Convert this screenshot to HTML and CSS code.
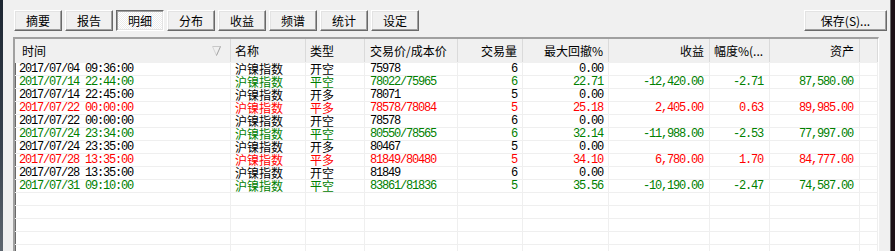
FILE: index.html
```html
<!DOCTYPE html>
<html lang="zh-CN">
<head>
<meta charset="utf-8">
<title>明细</title>
<link rel="stylesheet" href="styles.css">
</head>
<body>
<div class="app">
  <div class="edge-left"></div>
  <div class="main">
    <div class="toolbar">
      <div class="tabs">
        <button class="btn">摘要</button>
        <button class="btn">报告</button>
        <button class="btn active">明细</button>
        <button class="btn">分布</button>
        <button class="btn">收益</button>
        <button class="btn">频谱</button>
        <button class="btn">统计</button>
        <button class="btn">设定</button>
      </div>
      <button class="btn save">保存(S)...</button>
    </div>
    <div class="frame">
      <div class="row head">
        <div class="c hc first">时间<svg class="sort" width="9" height="10" viewBox="0 0 9 10"><polyline points="0.5,0.5 8.5,0.5" stroke="#c8c8c8" fill="none"/><polyline points="0.5,0.5 4.5,9.5" stroke="#d4d4d4" fill="none"/><polyline points="8.5,0.5 4.5,9.5" stroke="#a0a0a0" fill="none"/></svg></div>
        <div class="c hc">名称</div>
        <div class="c hc">类型</div>
        <div class="c hc px">交易价/成本价</div>
        <div class="c hc r">交易量</div>
        <div class="c hc r">最大回撤%</div>
        <div class="c hc r">收益</div>
        <div class="c hc">幅度%(...</div>
        <div class="c hc r">资产</div>
        <div class="c hc"></div>
      </div>

      <div class="row">
        <div class="c m t">2017/07/04 09:36:00</div><div class="c z">沪镍指数</div><div class="c z">开空</div><div class="c m px">75978</div><div class="c m r">6</div><div class="c m r">0.00</div><div class="c m r2"></div><div class="c m r2"></div><div class="c m r2"></div><div class="c"></div>
      </div>
      <div class="row green">
        <div class="c m t">2017/07/14 22:44:00</div><div class="c z">沪镍指数</div><div class="c z">平空</div><div class="c m px">78022/75965</div><div class="c m r">6</div><div class="c m r">22.71</div><div class="c m r2">-12,420.00</div><div class="c m r2">-2.71</div><div class="c m r2">87,580.00</div><div class="c"></div>
      </div>
      <div class="row">
        <div class="c m t">2017/07/14 22:45:00</div><div class="c z">沪镍指数</div><div class="c z">开多</div><div class="c m px">78071</div><div class="c m r">5</div><div class="c m r">0.00</div><div class="c m r2"></div><div class="c m r2"></div><div class="c m r2"></div><div class="c"></div>
      </div>
      <div class="row red">
        <div class="c m t">2017/07/22 00:00:00</div><div class="c z">沪镍指数</div><div class="c z">平多</div><div class="c m px">78578/78084</div><div class="c m r">5</div><div class="c m r">25.18</div><div class="c m r2">2,405.00</div><div class="c m r2">0.63</div><div class="c m r2">89,985.00</div><div class="c"></div>
      </div>
      <div class="row">
        <div class="c m t">2017/07/22 00:00:00</div><div class="c z">沪镍指数</div><div class="c z">开空</div><div class="c m px">78578</div><div class="c m r">6</div><div class="c m r">0.00</div><div class="c m r2"></div><div class="c m r2"></div><div class="c m r2"></div><div class="c"></div>
      </div>
      <div class="row green">
        <div class="c m t">2017/07/24 23:34:00</div><div class="c z">沪镍指数</div><div class="c z">平空</div><div class="c m px">80550/78565</div><div class="c m r">6</div><div class="c m r">32.14</div><div class="c m r2">-11,988.00</div><div class="c m r2">-2.53</div><div class="c m r2">77,997.00</div><div class="c"></div>
      </div>
      <div class="row">
        <div class="c m t">2017/07/24 23:35:00</div><div class="c z">沪镍指数</div><div class="c z">开多</div><div class="c m px">80467</div><div class="c m r">5</div><div class="c m r">0.00</div><div class="c m r2"></div><div class="c m r2"></div><div class="c m r2"></div><div class="c"></div>
      </div>
      <div class="row red">
        <div class="c m t">2017/07/28 13:35:00</div><div class="c z">沪镍指数</div><div class="c z">平多</div><div class="c m px">81849/80480</div><div class="c m r">5</div><div class="c m r">34.10</div><div class="c m r2">6,780.00</div><div class="c m r2">1.70</div><div class="c m r2">84,777.00</div><div class="c"></div>
      </div>
      <div class="row">
        <div class="c m t">2017/07/28 13:35:00</div><div class="c z">沪镍指数</div><div class="c z">开空</div><div class="c m px">81849</div><div class="c m r">6</div><div class="c m r">0.00</div><div class="c m r2"></div><div class="c m r2"></div><div class="c m r2"></div><div class="c"></div>
      </div>
      <div class="row green">
        <div class="c m t">2017/07/31 09:10:00</div><div class="c z">沪镍指数</div><div class="c z">平空</div><div class="c m px">83861/81836</div><div class="c m r">5</div><div class="c m r">35.56</div><div class="c m r2">-10,190.00</div><div class="c m r2">-2.47</div><div class="c m r2">74,587.00</div><div class="c"></div>
      </div>

      <div class="row empty"><div class="c"></div><div class="c"></div><div class="c"></div><div class="c"></div><div class="c"></div><div class="c"></div><div class="c"></div><div class="c"></div><div class="c"></div><div class="c"></div></div>
      <div class="row empty"><div class="c"></div><div class="c"></div><div class="c"></div><div class="c"></div><div class="c"></div><div class="c"></div><div class="c"></div><div class="c"></div><div class="c"></div><div class="c"></div></div>
      <div class="row empty"><div class="c"></div><div class="c"></div><div class="c"></div><div class="c"></div><div class="c"></div><div class="c"></div><div class="c"></div><div class="c"></div><div class="c"></div><div class="c"></div></div>
      <div class="row empty"><div class="c"></div><div class="c"></div><div class="c"></div><div class="c"></div><div class="c"></div><div class="c"></div><div class="c"></div><div class="c"></div><div class="c"></div><div class="c"></div></div>
      <div class="row empty"><div class="c"></div><div class="c"></div><div class="c"></div><div class="c"></div><div class="c"></div><div class="c"></div><div class="c"></div><div class="c"></div><div class="c"></div><div class="c"></div></div>
      <div class="row empty"><div class="c"></div><div class="c"></div><div class="c"></div><div class="c"></div><div class="c"></div><div class="c"></div><div class="c"></div><div class="c"></div><div class="c"></div><div class="c"></div></div>
    </div>
  </div>
  <div class="edge-right"></div>
</div>
</body>
</html>
```

FILE: styles.css
```css
* { box-sizing: border-box; }

html, body {
  margin: 0;
  padding: 0;
  width: 895px;
  height: 251px;
  overflow: hidden;
  background: #f0f0f0;
}

body {
  font-family: "Noto Sans CJK SC", "Liberation Sans", sans-serif;
  font-size: 12px;
  color: #000;
}

.app {
  display: flex;
  height: 251px;
}

.edge-left {
  width: 3px;
  flex: none;
  background: linear-gradient(#1c2531, #3a4450 60%, #5d656e);
}

.edge-right {
  width: 5px;
  flex: none;
  border-left: 1px solid #6c6c6c;
  background: #1d1116;
}

.main {
  flex: 1;
  min-width: 0;
  display: flex;
  flex-direction: column;
  padding-top: 10px;
  overflow: hidden;
}

.toolbar {
  display: flex;
  justify-content: space-between;
  align-items: flex-start;
  height: 21px;
  padding: 0 3px 0 11px;
  flex: none;
}

.tabs {
  display: flex;
  gap: 3px;
}

.btn {
  width: 48px;
  height: 21px;
  margin: 0;
  padding: 0;
  font-family: "Noto Sans CJK SC", sans-serif;
  font-size: 12px;
  line-height: 17px;
  color: #000;
  background: #f0f0f0;
  border: 1px solid;
  border-color: #ffffff #696969 #696969 #ffffff;
  box-shadow: inset -1px -1px 0 #a0a0a0, inset 1px 1px 0 #e3e3e3;
  text-align: center;
}

.btn.active {
  border-color: #696969 #ffffff #ffffff #696969;
  box-shadow: inset 1px 1px 0 #a0a0a0, inset -1px -1px 0 #e3e3e3;
  background: repeating-conic-gradient(#ffffff 0 25%, #ececec 0 50%) 0 0 / 2px 2px;
}

.btn.save {
  width: 83px;
}

.frame {
  margin: 6px 11px 0 10px;
  border-style: solid;
  border-width: 2px 1px 0 2px;
  border-color: #a0a0a0 #ffffff #ffffff #a0a0a0;
  background: #ffffff;
  box-shadow: inset 1px 1px 0 #696969;
  flex: 1;
  overflow: hidden;
}

.row {
  display: grid;
  grid-template-columns: 216px 75px 59px 93px 65px 86px 101px 60px 90px 1fr;
  height: 13px;
  border-bottom: 1px solid #efefef;
}

.row.head {
  height: 24px;
  background: #f0f0f0;
  border-bottom: 1px solid #f0f0f0;
}

.c {
  border-right: 1px solid #efefef;
  white-space: nowrap;
  overflow: visible;
  line-height: 12px;
  padding: 0 0 0 4px;
}

.hc {
  line-height: 23px;
  border-right: 1px solid #dadada;
  padding-left: 4px;
}

.hc.first {
  padding: 0 9px 0 7px;
  display: flex;
  justify-content: space-between;
  align-items: center;
}

.hc.first .sort {
  display: block;
  margin-top: 1px;
}

.hc.px { padding-left: 5px; }

.hc.r {
  text-align: right;
  padding-right: 6px;
}

.m {
  font-family: "Liberation Mono", "Noto Sans CJK SC", monospace;
  font-size: 12px;
  letter-spacing: -1.2px;
}

.z {
  font-family: "Noto Sans CJK SC", sans-serif;
  font-size: 12px;
  padding-left: 4px;
}

.c.t { padding-left: 4px; }
.c.px { padding-left: 5px; }

.c.r {
  text-align: right;
  padding-right: 5px;
}

.c.r2 {
  text-align: right;
  padding-right: 6px;
}

.green { color: #008000; }
.red { color: #ff0000; }
```
